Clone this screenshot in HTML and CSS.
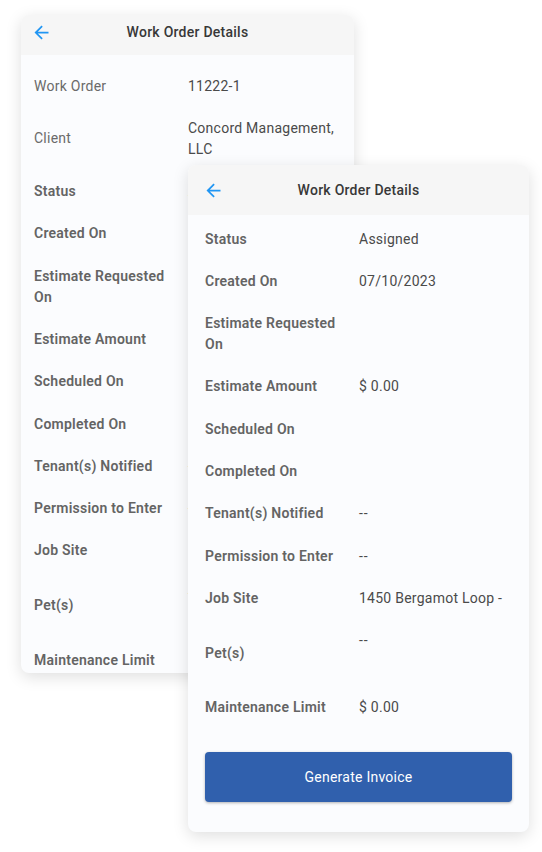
FILE: index.html
```html
<!DOCTYPE html>
<html>
  <head>
    <meta charset="UTF-8" />
    <title>Work Order Details</title>
    <link rel="stylesheet" href="styles.css">
  </head>

  <body>
    <div class="stage">
      <div class="card card-back">
        <div class="header">
          <svg class="back-icon" viewBox="0 0 24 24"><path d="M20 11H7.83l5.59-5.59L12 4l-8 8 8 8 1.41-1.41L7.83 13H20v-2z"/></svg>
          <h1>Work Order Details</h1>
          <span></span>
        </div>
        <div class="body">
          <div class="row"><div class="label plain">Work Order</div><div class="value">11222-1</div></div>
          <div class="row"><div class="label plain">Client</div><div class="value">Concord Management, LLC</div></div>
          <div class="row"><div class="label">Status</div><div class="value">Assigned</div></div>
          <div class="row"><div class="label">Created On</div><div class="value">07/10/2023</div></div>
          <div class="row"><div class="label">Estimate Requested On</div><div class="value"></div></div>
          <div class="row"><div class="label">Estimate Amount</div><div class="value">$ 0.00</div></div>
          <div class="row"><div class="label">Scheduled On</div><div class="value"></div></div>
          <div class="row"><div class="label">Completed On</div><div class="value"></div></div>
          <div class="row"><div class="label">Tenant(s) Notified</div><div class="value dash">--</div></div>
          <div class="row"><div class="label">Permission to Enter</div><div class="value dash">--</div></div>
          <div class="row"><div class="label">Job Site</div><div class="value">1450 Bergamot Loop -</div></div>
          <div class="row row-pets"><div class="label">Pet(s)</div><div class="value dash">--</div></div>
          <div class="row"><div class="label">Maintenance Limit</div><div class="value">$ 0.00</div></div>
        </div>
      </div>

      <div class="card card-front">
        <div class="header">
          <svg class="back-icon" viewBox="0 0 24 24"><path d="M20 11H7.83l5.59-5.59L12 4l-8 8 8 8 1.41-1.41L7.83 13H20v-2z"/></svg>
          <h1>Work Order Details</h1>
          <span></span>
        </div>
        <div class="body">
          <div class="row"><div class="label">Status</div><div class="value">Assigned</div></div>
          <div class="row"><div class="label">Created On</div><div class="value">07/10/2023</div></div>
          <div class="row"><div class="label">Estimate Requested On</div><div class="value"></div></div>
          <div class="row"><div class="label">Estimate Amount</div><div class="value">$ 0.00</div></div>
          <div class="row"><div class="label">Scheduled On</div><div class="value"></div></div>
          <div class="row"><div class="label">Completed On</div><div class="value"></div></div>
          <div class="row"><div class="label">Tenant(s) Notified</div><div class="value dash">--</div></div>
          <div class="row"><div class="label">Permission to Enter</div><div class="value dash">--</div></div>
          <div class="row"><div class="label">Job Site</div><div class="value">1450 Bergamot Loop -</div></div>
          <div class="row row-pets"><div class="label">Pet(s)</div><div class="value dash">--</div></div>
          <div class="row"><div class="label">Maintenance Limit</div><div class="value">$ 0.00</div></div>
          <button class="invoice">Generate Invoice</button>
        </div>
      </div>
    </div>
  </body>
</html>
```

FILE: styles.css
```css
body {
  font-family: Roboto, "Liberation Sans", sans-serif;
  margin: 0;
  padding: 0;
  background-color: #fff;
}

.stage {
  display: grid;
  width: 542px;
  height: 852px;
}

.card {
  grid-area: 1 / 1;
  display: flex;
  flex-direction: column;
  align-self: start;
  justify-self: start;
  background-color: #fbfcfe;
  border-radius: 8px;
  overflow: hidden;
  box-shadow: 0 4px 16px rgba(0, 0, 0, 0.13);
}

.card-back {
  margin: 15px 0 0 21px;
  width: 333px;
  height: 658px;
}

.card-front {
  margin: 165px 0 0 188px;
  width: 341px;
  height: 667px;
}

.header {
  display: grid;
  grid-template-columns: 1fr auto 1fr;
  align-items: center;
  background-color: #f6f6f6;
  flex: none;
}

.card-back .header {
  height: 34px;
  padding: 0 10px 6px;
}

.card-front .header {
  height: 50px;
  padding: 0 15px;
}

.header h1 {
  margin: 0;
  font-size: 14px;
  font-weight: 500;
  letter-spacing: 0.25px;
  color: #383838;
}

.back-icon {
  width: 21px;
  height: 21px;
  fill: #2196f3;
}

.body {
  display: flex;
  flex-direction: column;
}

.card-back .body {
  padding: 10px 13px 0;
}

.card-front .body {
  padding: 3px 17px 30px;
}

.row {
  display: flex;
  align-items: center;
  padding: 10.65px 0;
  font-size: 14px;
  line-height: 21px;
  letter-spacing: 0.25px;
}

.label {
  flex: none;
  width: 154px;
  padding-right: 14px;
  box-sizing: border-box;
  font-weight: 600;
  color: #646464;
}

.label.plain {
  font-weight: 400;
  color: #6a6a6a;
}

.value {
  flex: 1;
  color: #4a4a4a;
}

.value.dash {
  letter-spacing: 1px;
}

.row-pets {
  min-height: 46px;
}

.row-pets .value {
  align-self: flex-start;
}

.invoice {
  margin-top: 23px;
  height: 50px;
  border: none;
  border-radius: 4px;
  background-color: #3060ad;
  color: #fff;
  font-family: Roboto, "Liberation Sans", sans-serif;
  font-size: 14px;
  letter-spacing: 0.25px;
  box-shadow: 0 1px 3px rgba(0, 0, 0, 0.3);
  cursor: pointer;
}
```
